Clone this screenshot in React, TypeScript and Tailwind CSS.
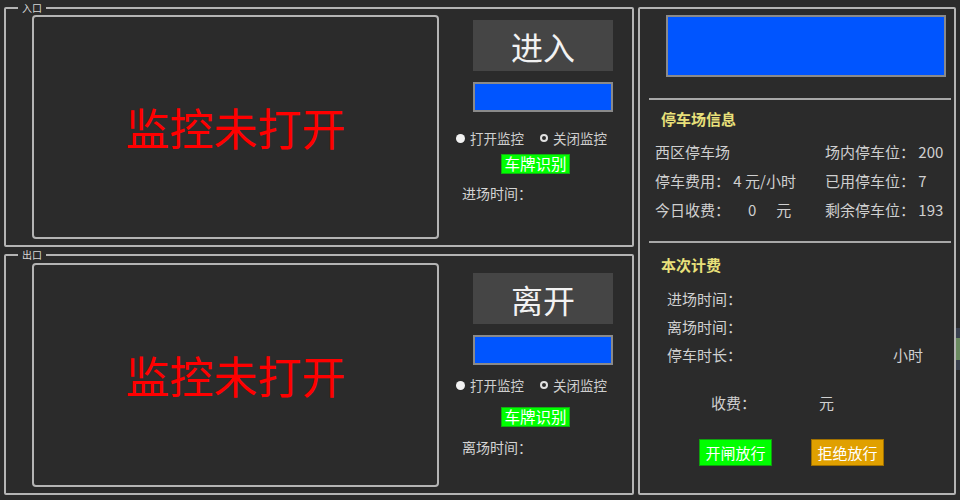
import React from 'react';

const FONT = { fontFamily: '"Noto Sans CJK SC", "DejaVu Sans", sans-serif' };

type GateProps = {
  title: string;
  action: string;
  timeLabel: string;
  height: string;
  framePad: string;
  btnTop: string;
  radioTop: string;
  plateTop: string;
  timeTop: string;
};

function Radio({ checked, label }: { checked?: boolean; label: string }) {
  return (
    <div className="flex items-center gap-[5px]">
      {checked ? (
        <span className="w-[9px] h-[9px] rounded-full bg-[#f2f2f2]" />
      ) : (
        <span className="w-[8px] h-[8px] rounded-full border-2 border-[#e0e0e0]" />
      )}
      <span>{label}</span>
    </div>
  );
}

function Gate(p: GateProps) {
  return (
    <div className={`relative ${p.height} border-2 border-[#b4b4b4] rounded-[2px] flex ${p.framePad} pl-[26px] pb-[6px]`}>
      <span className="absolute -top-[7px] left-[12px] px-[4px] bg-[#2b2b2b] text-[10px] leading-[12px] text-[#d8d8d8]">
        {p.title}
      </span>
      {/* camera frame */}
      <div className="w-[407px] h-full border-2 border-[#b4b4b4] rounded-[4px] flex items-center justify-center">
        <span className="text-[44px] leading-none text-[#ff0000]">监控未打开</span>
      </div>
      {/* controls */}
      <div className="ml-[17px] w-[164px] flex flex-col">
        <div className={`${p.btnTop} ml-[17px] w-[140px] h-[51px] bg-[#454545] flex items-center justify-center text-[32px] leading-none text-[#f2f2f2]`}>
          {p.action}
        </div>
        <div className="mt-[11px] ml-[17px] w-[140px] h-[30px] bg-[#0055ff] border-2 border-[#8a8a8a]" />
        <div className={`${p.radioTop} flex items-center gap-[16px] text-[13.5px] leading-[16px] text-[#cfcfcf]`}>
          <Radio checked label="打开监控" />
          <Radio label="关闭监控" />
        </div>
        <div className={`${p.plateTop} ml-[45px] w-[69px] h-[20px] bg-[#00ff00] border border-[#10b010] flex items-center justify-center text-[15.5px] leading-none text-white`}>
          车牌识别
        </div>
        <div className={`${p.timeTop} ml-[6px] text-[14px] leading-[18px] text-[#d4d4d4]`}>{p.timeLabel}</div>
      </div>
    </div>
  );
}

export default function App() {
  return (
    <div style={FONT} className="w-[960px] h-[500px] bg-[#2b2b2b] flex pl-[4px] pt-[7px] overflow-hidden">
      {/* gates */}
      <div className="w-[630px] flex flex-col gap-[7px]">
        <Gate
          title="入口"
          action="进入"
          timeLabel="进场时间："
          height="h-[240px]"
          framePad="pt-[6px]"
          btnTop="mt-[5px]"
          radioTop="mt-[18px]"
          plateTop="mt-[8px]"
          timeTop="mt-[10px]"
        />
        <Gate
          title="出口"
          action="离开"
          timeLabel="离场时间："
          height="h-[241px]"
          framePad="pt-[7px]"
          btnTop="mt-[10px]"
          radioTop="mt-[12px]"
          plateTop="mt-[14px]"
          timeTop="mt-[11px]"
        />
      </div>

      {/* info panel */}
      <div className="ml-[4px] w-[318px] h-[488px] border-2 border-[#b4b4b4] rounded-[2px] flex flex-col text-[15px] leading-[18px] text-[#d0d0d0]">
        <div className="mt-[6px] ml-[26px] w-[280px] h-[62px] bg-[#0055ff] border-2 border-[#8a8a8a]" />
        <div className="mt-[21px] ml-[9px] w-[302px] h-[2px] bg-[#a8a8a8]" />

        <div className="mt-[10px] ml-[21px] font-bold text-[#e8e07a]">停车场信息</div>
        <div className="mt-[15px] ml-[15px] grid grid-cols-[170px_1fr] gap-y-[11px]">
          <span>西区停车场</span>
          <span>场内停车位：&nbsp;200</span>
          <span>停车费用：&nbsp;4 元/小时</span>
          <span>已用停车位：&nbsp;7</span>
          <span className="flex">
            今日收费：<span className="ml-[18px]">0</span>
            <span className="ml-[20px]">元</span>
          </span>
          <span>剩余停车位：&nbsp;193</span>
        </div>
        <div className="mt-[22px] ml-[9px] w-[302px] h-[2px] bg-[#a8a8a8]" />

        <div className="mt-[13px] ml-[21px] font-bold text-[#e8e07a]">本次计费</div>
        <div className="mt-[16px] ml-[27px] flex flex-col gap-[10px]">
          <span>进场时间：</span>
          <span>离场时间：</span>
          <span className="flex">
            停车时长：<span className="ml-[151px]">小时</span>
          </span>
        </div>
        <div className="mt-[30px] ml-[71px] flex">
          收费：<span className="ml-[63px]">元</span>
        </div>
        <div className="mt-[27px] ml-[59px] flex gap-[39px]">
          <div className="w-[73px] h-[27px] bg-[#00ff00] border border-[#10a010] flex items-center justify-center text-[15px] leading-none text-white">
            开闸放行
          </div>
          <div className="w-[73px] h-[27px] bg-[#e0a000] border border-[#a07000] flex items-center justify-center text-[15px] leading-none text-white">
            拒绝放行
          </div>
        </div>
      </div>

      {/* edge of neighbouring window */}
      <div className="mt-[321px] w-[4px] h-[42px] bg-[#3a4150] flex flex-col justify-center">
        <div className="h-[22px] bg-[#6a8a60]" />
      </div>
    </div>
  );
}
